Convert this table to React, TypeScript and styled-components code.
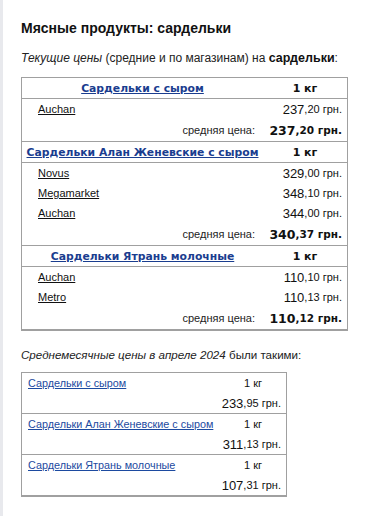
import React from "react";
import styled, { createGlobalStyle } from "styled-components";

const Global = createGlobalStyle`
  html, body { margin: 0; padding: 0; background: #fff; }
  body { font-family: "Liberation Sans", Arial, sans-serif; color: #111; }
`;

const Page = styled.div`
  min-height: 100vh;
  box-sizing: border-box;
  border-left: 3px solid #e8e9ed;
  padding: 19px 18px 20px 18px;
`;

const Title = styled.h1`
  margin: 0;
  font-size: 14px;
  line-height: 18px;
  font-weight: bold;
  color: #111;
`;

const Lead = styled.p`
  margin: 13px 0 0;
  font-size: 12px;
  line-height: 16px;
  color: #222;
  b { color: #111; font-size: 12.5px; }
`;

const Table = styled.div<{ $w: number; $col: number; $mt: number }>`
  width: ${(p) => p.$w}px;
  box-sizing: border-box;
  border: 1px solid #a0a0a0;
  border-bottom-width: 2px;
  display: grid;
  grid-template-columns: 1fr ${(p) => p.$col}px;
  margin-top: ${(p) => p.$mt}px;
`;

const Sep = styled.div`
  grid-column: 1 / -1;
  height: 1px;
  background: #a0a0a0;
`;

const HeadName = styled.div`
  height: 20px;
  display: flex;
  align-items: center;
  justify-content: center;
  font-family: "DejaVu Sans", Verdana, sans-serif;
  font-weight: bold;
  font-size: 10.8px;
  a { color: #1a3d8f; text-decoration: underline; }
`;

const HeadUnit = styled.div`
  height: 20px;
  display: flex;
  align-items: center;
  justify-content: center;
  font-family: "DejaVu Sans", Verdana, sans-serif;
  font-weight: bold;
  font-size: 11px;
  color: #111;
`;

const ShopCell = styled.div`
  height: 20px;
  display: flex;
  align-items: center;
  padding-left: 16px;
  font-size: 11px;
  a { color: #111; text-decoration: underline; }
`;

const PriceCell = styled.div<{ $h?: number }>`
  height: ${(p) => p.$h ?? 20}px;
  display: flex;
  align-items: center;
  justify-content: flex-end;
  padding-right: 5px;
  white-space: nowrap;
  color: #111;
`;

const Int = styled.span<{ $bold?: boolean }>`
  font-size: ${(p) => (p.$bold ? 12.5 : 13)}px;
  font-family: ${(p) => (p.$bold ? `"DejaVu Sans", Verdana, sans-serif` : `"Liberation Sans", Arial, sans-serif`)};
  font-weight: ${(p) => (p.$bold ? "bold" : "normal")};
`;

const Frac = styled.span<{ $bold?: boolean }>`
  font-size: ${(p) => (p.$bold ? 10.5 : 11)}px;
  font-family: ${(p) => (p.$bold ? `"DejaVu Sans", Verdana, sans-serif` : `"Liberation Sans", Arial, sans-serif`)};
  font-weight: ${(p) => (p.$bold ? "bold" : "normal")};
`;

const AvgLabel = styled.div`
  height: 22px;
  display: flex;
  align-items: center;
  justify-content: flex-end;
  padding-right: 8px;
  font-size: 11px;
  color: #222;
`;

const Note = styled.p`
  margin: 16px 0 0;
  font-size: 11.6px;
  line-height: 15px;
  color: #222;
`;

const SmallName = styled.div`
  height: 20px;
  display: flex;
  align-items: center;
  padding-left: 6px;
  font-size: 10.8px;
  white-space: nowrap;
  a { color: #1c4aa0; text-decoration: underline; }
`;

const SmallUnit = styled.div`
  height: 20px;
  display: flex;
  align-items: center;
  justify-content: center;
  font-size: 11px;
  color: #111;
`;

const Empty = styled.div``;

type Shop = { name: string; int: string; frac: string };
type Product = { name: string; shops: Shop[]; avgInt: string; avgFrac: string };

const products: Product[] = [
  { name: "Сардельки с сыром", shops: [{ name: "Auchan", int: "237", frac: "20" }], avgInt: "237", avgFrac: "20" },
  {
    name: "Сардельки Алан Женевские с сыром",
    shops: [
      { name: "Novus", int: "329", frac: "00" },
      { name: "Megamarket", int: "348", frac: "10" },
      { name: "Auchan", int: "344", frac: "00" },
    ],
    avgInt: "340",
    avgFrac: "37",
  },
  {
    name: "Сардельки Ятрань молочные",
    shops: [
      { name: "Auchan", int: "110", frac: "10" },
      { name: "Metro", int: "110", frac: "13" },
    ],
    avgInt: "110",
    avgFrac: "12",
  },
];

const monthly = [
  { name: "Сардельки с сыром", int: "233", frac: "95" },
  { name: "Сардельки Алан Женевские с сыром", int: "311", frac: "13" },
  { name: "Сардельки Ятрань молочные", int: "107", frac: "31" },
];

export default function App() {
  return (
    <>
      <Global />
      <Page>
        <Title>Мясные продукты: сардельки</Title>
        <Lead>
          <i>Текущие цены</i> (средние и по магазинам) на <b>сардельки</b>:
        </Lead>
        <Table $w={327} $col={84} $mt={11}>
          {products.map((p, i) => (
            <React.Fragment key={p.name}>
              {i > 0 && <Sep />}
              <HeadName>
                <a href="#">{p.name}</a>
              </HeadName>
              <HeadUnit>1 кг</HeadUnit>
              <Sep />
              {p.shops.map((s, j) => (
                <React.Fragment key={j}>
                  <ShopCell>
                    <a href="#">{s.name}</a>
                  </ShopCell>
                  <PriceCell>
                    <Int>{s.int}</Int>
                    <Frac>,{s.frac} грн.</Frac>
                  </PriceCell>
                </React.Fragment>
              ))}
              <AvgLabel>средняя цена:</AvgLabel>
              <PriceCell $h={22}>
                <Int $bold>{p.avgInt}</Int>
                <Frac $bold>,{p.avgFrac} грн.</Frac>
              </PriceCell>
            </React.Fragment>
          ))}
        </Table>
        <Note>
          <i>Среднемесячные цены в апреле 2024</i> были такими:
        </Note>
        <Table $w={266} $col={66} $mt={10}>
          {monthly.map((m, i) => (
            <React.Fragment key={m.name}>
              {i > 0 && <Sep />}
              <SmallName>
                <a href="#">{m.name}</a>
              </SmallName>
              <SmallUnit>1 кг</SmallUnit>
              <Empty />
              <PriceCell>
                <Int>{m.int}</Int>
                <Frac>,{m.frac} грн.</Frac>
              </PriceCell>
            </React.Fragment>
          ))}
        </Table>
      </Page>
    </>
  );
}
